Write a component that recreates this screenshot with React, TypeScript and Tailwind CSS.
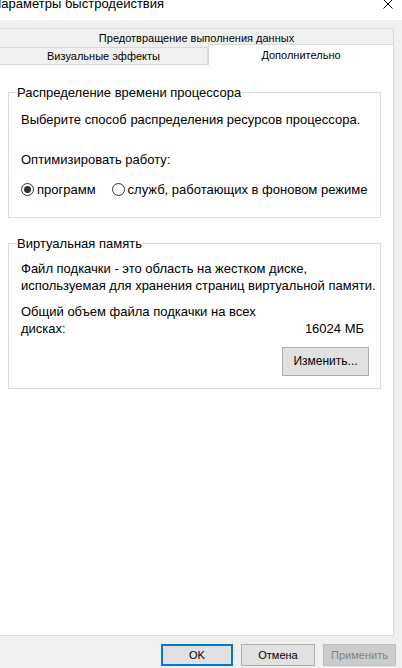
import React from 'react';

// Радиокнопка в стиле Windows 10
function Radio({ checked, label }: { checked?: boolean; label: string }) {
  return (
    <div className="flex items-center">
      <span className="w-[13px] h-[13px] rounded-full border border-[#333333] bg-white flex items-center justify-center shrink-0">
        {checked && <span className="w-[7px] h-[7px] rounded-full bg-[#333333]" />}
      </span>
      <span className="ml-[3px]">{label}</span>
    </div>
  );
}

function Group({ title, children, className = '' }: { title: string; children: React.ReactNode; className?: string }) {
  return (
    <fieldset className={`ml-[8px] w-[373px] min-w-0 border border-[#dcdcdc] pl-[7px] pr-[7px] ${className}`}>
      <legend className="px-[1px] leading-[17px]">{title}</legend>
      <div className="pl-[5px] pr-[4px]">{children}</div>
    </fieldset>
  );
}

export default function App() {
  return (
    <div className="w-[402px] h-[668px] overflow-hidden bg-[#f0f0f0] text-black font-['Liberation_Sans',Arial,sans-serif]">
      {/* Заголовок окна */}
      <div className="h-[20px] bg-white flex justify-between overflow-hidden">
        <div className="-ml-[8px] -mt-[4px] text-[13px] leading-[16px] whitespace-nowrap">Параметры быстродействия</div>
        <svg className="mr-[9px] -mt-[1px]" width="10" height="10" viewBox="0 0 10 10" fill="none" stroke="#000" strokeWidth="1">
          <path d="M0.5 0.5 L9.5 9.5 M9.5 0.5 L0.5 9.5" />
        </svg>
      </div>

      {/* Вкладки */}
      <div className="mt-[8px] w-[394px] text-[11px]">
        <div className="h-[19px] border-t border-r border-[#d9d9d9] flex items-center justify-center">
          Предотвращение выполнения данных
        </div>
        <div className="-mt-[3px] h-[21px] flex items-end">
          <div className="w-[208px] h-[18px] border-t border-r border-b border-[#d9d9d9] flex items-center justify-center">
            Визуальные эффекты
          </div>
          <div className="relative flex-1 h-[21px] bg-white border-t border-l border-r border-[#d9d9d9] flex justify-center pt-[2px] leading-[16px]">
            Дополнительно
          </div>
        </div>
      </div>

      {/* Содержимое вкладки */}
      <div className="w-[394px] h-[571px] bg-white border-r border-b border-[#d9d9d9] text-[13px] leading-[17px] pt-[19px]">
        <Group title="Распределение времени процессора" className="pb-[19px]">
          <p className="mt-[10px] whitespace-nowrap">Выберите способ распределения ресурсов процессора.</p>
          <p className="mt-[23px]">Оптимизировать работу:</p>
          <div className="mt-[13px] flex gap-[16px] whitespace-nowrap">
            <Radio checked label="программ" />
            <Radio label="служб, работающих в фоновом режиме" />
          </div>
        </Group>

        <Group title="Виртуальная память" className="mt-[17px] pb-[12px]">
          <p className="mt-[8px] whitespace-nowrap">
            Файл подкачки - это область на жестком диске,
            <br />
            используемая для хранения страниц виртуальной памяти.
          </p>
          <p className="mt-[9px]">Общий объем файла подкачки на всех</p>
          <div className="flex justify-between">
            <span>дисках:</span>
            <span className="mr-[5px]">16024 МБ</span>
          </div>
          <div className="mt-[10px] flex justify-end">
            <button className="w-[87px] h-[29px] bg-[#e1e1e1] border border-[#adadad] text-[12px]">Изменить...</button>
          </div>
        </Group>
      </div>

      {/* Кнопки диалога */}
      <div className="mt-[8px] flex justify-end gap-[8px] pr-[6px] text-[11px]">
        <button className="w-[72px] h-[22px] bg-[#e1e1e1] border-2 border-[#0078d7]">OK</button>
        <button className="w-[74px] h-[22px] bg-[#e1e1e1] border border-[#adadad]">Отмена</button>
        <button className="w-[73px] h-[22px] bg-[#cccccc] border border-[#bfbfbf] text-[#838383]">Применить</button>
      </div>
    </div>
  );
}
